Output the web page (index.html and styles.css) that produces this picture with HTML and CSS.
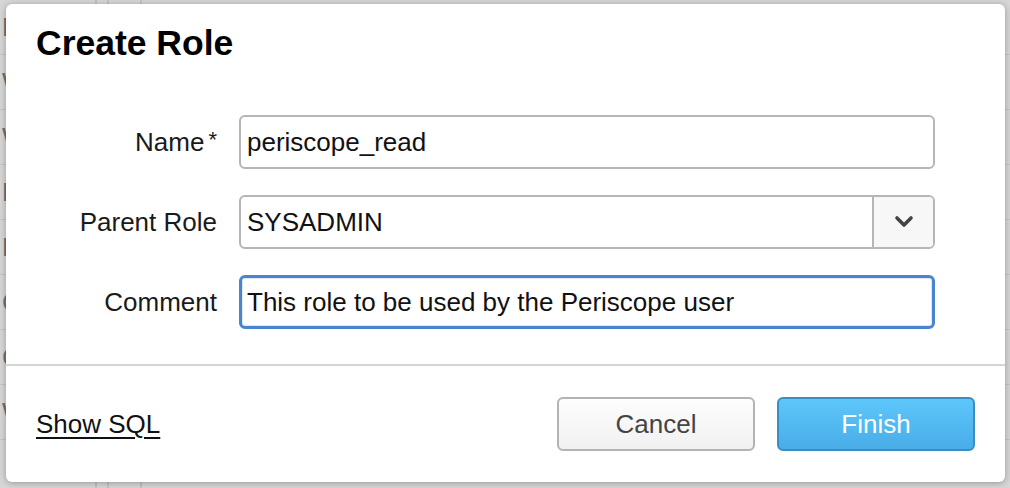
FILE: index.html
```html
<!DOCTYPE html>
<html>
<head>
<meta charset="utf-8">
<link rel="stylesheet" href="styles.css">
</head>
<body>
<div class="page">
  <div class="bg-list">
    <div class="bg-row"><span class="bg-letter">N</span><span class="col c1"></span><span class="col c2"></span><span class="col c3"></span></div>
    <div class="bg-row"><span class="bg-letter">W</span><span class="col c1"></span><span class="col c2"></span><span class="col c3"></span></div>
    <div class="bg-row"><span class="bg-letter">W</span><span class="col c1"></span><span class="col c2"></span><span class="col c3"></span></div>
    <div class="bg-row"><span class="bg-letter">D</span><span class="col c1"></span><span class="col c2"></span><span class="col c3"></span></div>
    <div class="bg-row"><span class="bg-letter">E</span><span class="col c1"></span><span class="col c2"></span><span class="col c3"></span></div>
    <div class="bg-row"><span class="bg-letter">C</span><span class="col c1"></span><span class="col c2"></span><span class="col c3"></span></div>
    <div class="bg-row"><span class="bg-letter">C</span><span class="col c1"></span><span class="col c2"></span><span class="col c3"></span></div>
    <div class="bg-row"><span class="bg-letter">W</span><span class="col c1"></span><span class="col c2"></span><span class="col c3"></span></div>
    <div class="bg-row"><span class="bg-letter"></span><span class="col c1"></span><span class="col c2"></span><span class="col c3"></span></div>
  </div>

  <div class="dialog">
    <h1 class="title">Create Role</h1>
    <div class="form">
      <div class="row">
        <label class="label">Name<span class="req">*</span></label>
        <div class="field"><span class="value">periscope_read</span></div>
      </div>
      <div class="row">
        <label class="label">Parent Role</label>
        <div class="field select">
          <span class="value">SYSADMIN</span>
          <span class="arrow">
            <svg width="20" height="14" viewBox="0 0 20 14"><polyline points="3,3 10,10 17,3" fill="none" stroke="#444" stroke-width="3.6" stroke-linecap="round" stroke-linejoin="round"/></svg>
          </span>
        </div>
      </div>
      <div class="row">
        <label class="label">Comment</label>
        <div class="field focused"><span class="value">This role to be used by the Periscope user</span></div>
      </div>
    </div>
    <div class="divider"></div>
    <div class="footer">
      <a class="show-sql">Show SQL</a>
      <div class="buttons">
        <button class="btn cancel">Cancel</button>
        <button class="btn finish">Finish</button>
      </div>
    </div>
  </div>
</div>
</body>
</html>
```

FILE: styles.css
```css
html, body {
  margin: 0;
  padding: 0;
}
body {
  width: 1010px;
  height: 488px;
  overflow: hidden;
  font-family: "Liberation Sans", Arial, Helvetica, sans-serif;
  background: #d6d6d6;
}
.page {
  position: relative;
  width: 1010px;
  height: 488px;
  overflow: hidden;
}
.bg-list {
  display: flex;
  flex-direction: column;
}
.bg-row {
  position: relative;
  height: 54px;
  border-bottom: 1px solid #c6c6c6;
  display: flex;
  align-items: center;
}
.bg-letter {
  margin-left: 2px;
  font-size: 26px;
  color: #707070;
  width: 20px;
}
.col {
  position: absolute;
  top: 0;
  bottom: 0;
  width: 2px;
  background: #c2c2c2;
}
.c1 { left: 95px; }
.c2 { left: 107px; }
.c3 { left: 140px; }

.dialog {
  position: absolute;
  left: 6px;
  top: 4px;
  width: 999px;
  height: 478px;
  background: #fff;
  border-radius: 6px;
  box-shadow: 0 1px 6px rgba(0, 0, 0, 0.3);
  display: flex;
  flex-direction: column;
  box-sizing: border-box;
}
.title {
  margin: 19px 0 0 30px;
  font-size: 35.5px;
  line-height: 40px;
  font-weight: bold;
  color: #000;
}
.form {
  padding: 52px 70px 0 30px;
  display: flex;
  flex-direction: column;
  gap: 26px;
}
.row {
  display: flex;
  align-items: center;
  gap: 22px;
}
.label {
  width: 181px;
  text-align: right;
  font-size: 26px;
  color: #1a1a1a;
  white-space: nowrap;
}
.req {
  display: inline-block;
  margin-left: 4px;
  font-size: 22px;
  vertical-align: 4px;
}
.field {
  flex: 1;
  height: 54px;
  box-sizing: border-box;
  border: 2px solid #b6b6b6;
  border-radius: 6px;
  display: flex;
  align-items: center;
  padding-left: 6px;
  font-size: 26px;
  color: #111;
  overflow: hidden;
}
.value {
  flex: 1;
  white-space: nowrap;
}
.arrow {
  width: 59px;
  align-self: stretch;
  border-left: 2px solid #b6b6b6;
  background: #f7f7f7;
  display: flex;
  align-items: center;
  justify-content: center;
}
.focused {
  border: 3px solid #4a84d0;
  padding-left: 5px;
  box-shadow: inset 0 0 0 1px #dfe9f7;
}
.divider {
  margin-top: 35px;
  height: 2px;
  background: #d5d5d5;
}
.footer {
  display: flex;
  align-items: center;
  justify-content: space-between;
  padding: 31px 30px 29px 30px;
}
.show-sql {
  font-size: 26px;
  color: #111;
  text-decoration: underline;
  text-underline-offset: 4px;
  text-decoration-thickness: 2px;
}
.buttons {
  display: flex;
  gap: 22px;
}
.btn {
  width: 198px;
  height: 54px;
  border-radius: 6px;
  font-family: "Liberation Sans", Arial, Helvetica, sans-serif;
  font-size: 26px;
  cursor: pointer;
}
.cancel {
  background: linear-gradient(#fdfdfd, #f1f1f1);
  border: 2px solid #b3b3b3;
  color: #444;
}
.finish {
  background: linear-gradient(#5dc6fa, #49ade8);
  border: 2px solid #3b8dc2;
  color: #fff;
}
```
